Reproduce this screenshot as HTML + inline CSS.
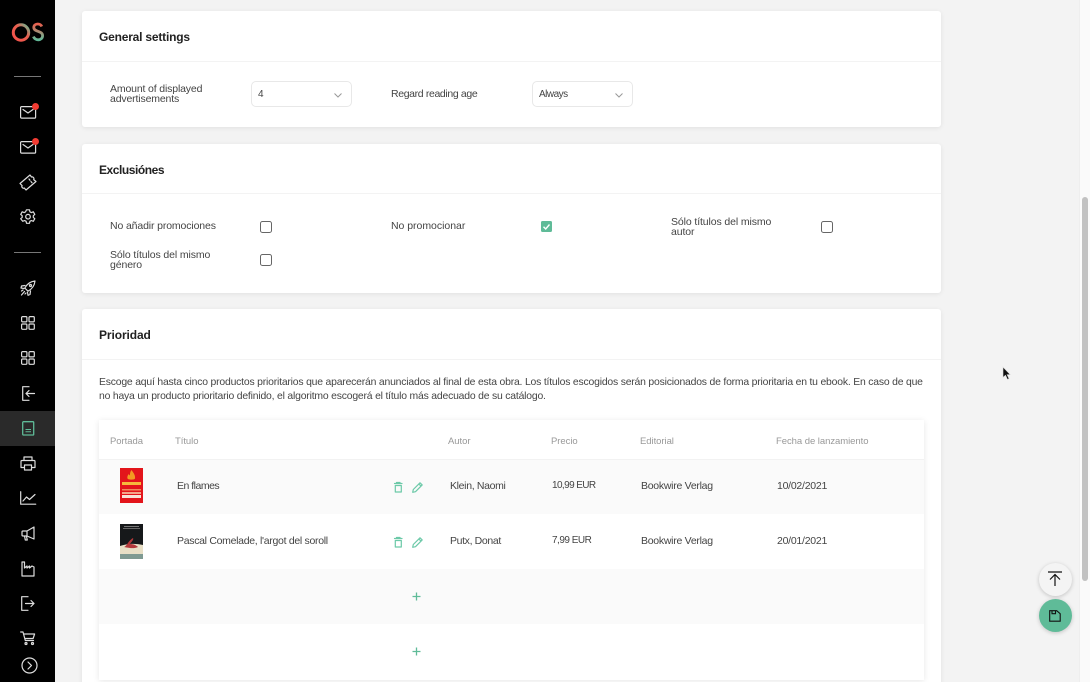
<!DOCTYPE html>
<html><head><meta charset="utf-8">
<style>
html,body{margin:0;padding:0;width:1090px;height:682px;overflow:hidden;background:#f3f3f3;font-family:"Liberation Sans",sans-serif;color:#444;}
#w{position:relative;width:1090px;height:682px;overflow:hidden;background:#f3f3f3;filter:blur(.3px)}
.a{position:absolute}
.t{position:absolute;font-size:10.5px;line-height:10px;white-space:nowrap;color:#444;letter-spacing:-.2px}
.card{position:absolute;left:82px;width:859px;background:#fff;border-radius:3px;box-shadow:0 1px 5px rgba(0,0,0,.08);overflow:hidden}
.h{position:absolute;font-size:12px;font-weight:bold;color:#222;line-height:14px;white-space:nowrap}
.line{position:absolute;left:0;right:0;height:1px;background:#f3f3f3}
.sel{position:absolute;width:99px;height:24px;border:1px solid #e8e8e8;border-radius:5px;background:#fff;top:81px}
.sel span{position:absolute;left:6px;top:7px;font-size:10px;line-height:11px;color:#444}
.sel svg{position:absolute;left:82px;top:11px}
.cb{position:absolute;width:9.5px;height:9.5px;border:1.3px solid #666;border-radius:2.5px;background:#fff}
.th{position:absolute;top:437px;font-size:9.5px;line-height:10px;color:#999;letter-spacing:-.05px;white-space:nowrap}
svg{position:absolute;overflow:visible}
.ic{fill:none;stroke:#ddd;stroke-width:1.2;stroke-linejoin:round;stroke-linecap:round}
.g{fill:none;stroke:#6cc9a8;stroke-width:1.2;stroke-linecap:round;stroke-linejoin:round}
</style></head>
<body>
<div id="w">
<!-- scrollbar -->
<div class="a" style="left:1079px;top:0;width:11px;height:682px;background:#fafafa;border-left:1px solid #eee;box-sizing:border-box"></div>
<div class="a" style="left:1081.5px;top:196.5px;width:6.5px;height:384px;background:#c1c1c1;border-radius:3px"></div>

<!-- cards -->
<div class="card" style="top:11px;height:116px"><div class="line" style="top:50px"></div></div>
<div class="card" style="top:144px;height:149px"><div class="line" style="top:49px"></div></div>
<div class="card" style="top:309px;height:385px"><div class="line" style="top:50px"></div></div>

<div class="h" style="left:99px;top:30px;letter-spacing:-.2px">General settings</div>
<div class="h" style="left:99px;top:163px;letter-spacing:-.45px">Exclusiónes</div>
<div class="h" style="left:99px;top:328px;letter-spacing:-.1px">Prioridad</div>

<!-- General -->
<div class="t" style="left:110px;top:84px;letter-spacing:-.15px">Amount of displayed<br>advertisements</div>
<div class="sel" style="left:251px"><span>4</span><svg width="8" height="5"><path d="M.5.5l3.500 3.500 3.500-3.500" fill="none" stroke="#999" stroke-width="1"/></svg></div>
<div class="t" style="left:391px;top:89px;letter-spacing:-.36px">Regard reading age</div>
<div class="sel" style="left:532px"><span style="letter-spacing:-.5px;top:7px">Always</span><svg width="8" height="5"><path d="M.5.5l3.500 3.500 3.500-3.500" fill="none" stroke="#999" stroke-width="1"/></svg></div>

<!-- Exclusiones -->
<div class="t" style="left:110px;top:221px;letter-spacing:-.13px">No añadir promociones</div>
<div class="cb" style="left:260px;top:221px"></div>
<div class="t" style="left:391px;top:221px;letter-spacing:-.03px">No promocionar</div>
<div class="a" style="left:541px;top:221px;width:11px;height:11px;background:#5fbb98;border-radius:1.5px"></div>
<svg style="left:541px;top:221px" width="11" height="11"><path d="M2.500 5.800l2.200 2.200 3.800-4.500" fill="none" stroke="#fff" stroke-width="1.400"/></svg>
<div class="t" style="left:671px;top:217px;letter-spacing:-.11px">Sólo títulos del mismo<br>autor</div>
<div class="cb" style="left:821px;top:221px"></div>
<div class="t" style="left:110px;top:250px;letter-spacing:-.11px">Sólo títulos del mismo<br>género</div>
<div class="cb" style="left:260px;top:254px"></div>

<!-- Prioridad -->
<div class="t" style="left:99px;top:376px;line-height:14px;letter-spacing:-.19px;font-size:10.4px">Escoge aquí hasta cinco productos prioritarios que aparecerán anunciados al final de esta obra. Los títulos escogidos serán posicionados de forma prioritaria en tu ebook. En caso de que<br>no haya un producto prioritario definido, el algoritmo escogerá el título más adecuado de su catálogo.</div>

<!-- table -->
<div class="a" style="left:99px;top:420px;width:825px;height:260px;background:#fff;box-shadow:0 1px 6px rgba(0,0,0,.1)"></div>
<div class="a" style="left:99px;top:459px;width:825px;height:55px;background:#fafafa;border-top:1px solid #f2f2f2;box-sizing:border-box"></div>
<div class="a" style="left:99px;top:569px;width:825px;height:55px;background:#fafafa"></div>
<div class="th" style="left:110px">Portada</div>
<div class="th" style="left:175px">Título</div>
<div class="th" style="left:448px">Autor</div>
<div class="th" style="left:551px">Precio</div>
<div class="th" style="left:640px">Editorial</div>
<div class="th" style="left:776px">Fecha de lanzamiento</div>

<!-- Row 1 -->
<div class="a" style="left:120px;top:468px;width:23px;height:35px;background:#e3151b"></div>
<svg style="left:120px;top:468px" width="23" height="35">
<path d="M11.500 2c2 3 4 5 3.500 8.500-.3 1.500-7 1.500-7.500 0-.6-2 .5-3 1-4.500.5 1 1 1 1.200 1.500.5-2 .3-3.500 1.800-5.500z" fill="#f29a22"/>
<rect x="2" y="14" width="19" height="3" fill="#f6b93c"/>
<rect x="2" y="21" width="19" height="1.500" fill="#f08a5c"/>
<rect x="2" y="24" width="19" height="2" fill="#f4a68a"/>
<rect x="2" y="27" width="19" height="3" fill="#f8e3d8"/>
</svg>
<div class="t" style="left:177px;top:481px;letter-spacing:-.5px">En flames</div>
<svg style="left:393.500px;top:481.500px" width="9" height="11"><path class="g" d="M.5 1.500h7.500M2.500 1.500V.5h3.500v1M1.300 3.500h6v6.500h-6z"/></svg>
<svg style="left:412px;top:481.500px" width="11" height="11"><path class="g" d="M.7 10.300l.6-2.800L8 .8l2.200 2.100L3.500 9.700zM6.800 2l2.200 2.100"/></svg>
<div class="t" style="left:450px;top:481px;letter-spacing:-.33px">Klein, Naomi</div>
<div class="t" style="left:552px;top:481px;font-size:10px;letter-spacing:-.6px">10,99 EUR</div>
<div class="t" style="left:641px;top:481px;letter-spacing:-.27px">Bookwire Verlag</div>
<div class="t" style="left:777px;top:481px;letter-spacing:-.25px">10/02/2021</div>

<!-- Row 2 -->
<div class="a" style="left:120px;top:524px;width:23px;height:35px;background:#16181a"></div>
<svg style="left:120px;top:524px" width="23" height="35">
<rect x="4" y="2" width="15" height="1" fill="#777"/>
<rect x="3" y="4" width="17" height="1" fill="#666"/>
<path d="M0 22c6-2 14-3 23-1v10H0z" fill="#e8dfc6"/>
<path d="M4 23c3-1 4-6 9-9 1 2-2 4-3 6 3 0 6 1 8 3-4 2-9 1-14 0z" fill="#b3383a"/>
<rect y="30" width="23" height="5" fill="#7f9a92"/>
</svg>
<div class="t" style="left:177px;top:536px;letter-spacing:-.3px">Pascal Comelade, l'argot del soroll</div>
<svg style="left:393.500px;top:536.500px" width="9" height="11"><path class="g" d="M.5 1.500h7.500M2.500 1.500V.5h3.500v1M1.300 3.500h6v6.500h-6z"/></svg>
<svg style="left:412px;top:536.500px" width="11" height="11"><path class="g" d="M.7 10.300l.6-2.800L8 .8l2.200 2.100L3.500 9.700zM6.800 2l2.200 2.100"/></svg>
<div class="t" style="left:450px;top:536px;letter-spacing:-.36px">Putx, Donat</div>
<div class="t" style="left:552px;top:536px;font-size:10px;letter-spacing:-.5px">7,99 EUR</div>
<div class="t" style="left:641px;top:536px;letter-spacing:-.27px">Bookwire Verlag</div>
<div class="t" style="left:777px;top:536px;letter-spacing:-.25px">20/01/2021</div>

<!-- plus -->
<svg style="left:412px;top:592px" width="9" height="9"><path d="M4.500.5v8M.5 4.500h8" stroke="#5fbb98" stroke-width="1.300" fill="none"/></svg>
<svg style="left:412px;top:647px" width="9" height="9"><path d="M4.500.5v8M.5 4.500h8" stroke="#5fbb98" stroke-width="1.300" fill="none"/></svg>

<!-- floating buttons -->
<div class="a" style="left:1039px;top:563px;width:33px;height:33px;border-radius:50%;background:#f4f4f4;box-shadow:0 1px 4px rgba(0,0,0,.2)"></div>
<svg style="left:1047px;top:571px" width="16" height="16"><path d="M1 1h14M8 15V3.500M3 8.500l5-5 5 5" fill="none" stroke="#111" stroke-width="1.200"/></svg>
<div class="a" style="left:1039px;top:599px;width:33px;height:33px;border-radius:50%;background:#5fbb98;box-shadow:0 1px 4px rgba(0,0,0,.2)"></div>
<svg style="left:1049px;top:610px" width="12" height="12"><path d="M.7.7h7l3.500 3v7.500H.7zM3 .7v3h3.500v-3" fill="none" stroke="#111" stroke-width="1.100"/></svg>

<!-- cursor -->
<svg style="left:1002px;top:366px" width="10" height="15"><path d="M1 1v10.500l2.500-2.200 2 4.200 1.600-.8-2-4h3.200z" fill="#111" stroke="#ddd" stroke-width=".6"/></svg>

<!-- sidebar -->
<div class="a" style="left:0;top:0;width:55px;height:682px;background:#000"></div>
<div class="a" style="left:0;top:411px;width:55px;height:35px;background:#2a2a2a"></div>
<div class="a" style="left:14px;top:76px;width:27px;height:1px;background:#777"></div>
<div class="a" style="left:14px;top:252px;width:27px;height:1px;background:#777"></div>

<!-- logo -->
<svg style="left:11px;top:22px" width="34" height="22">
<defs><linearGradient id="lg" x1="0" y1="1" x2="1" y2="0"><stop offset="0" stop-color="#f4504a"/><stop offset=".6" stop-color="#e8604f"/><stop offset="1" stop-color="#62c09a"/></linearGradient>
<linearGradient id="lg2" x1="0" y1="0" x2="0" y2="1"><stop offset="0" stop-color="#e8604f"/><stop offset="1" stop-color="#62b998"/></linearGradient></defs>
<circle cx="10" cy="10.500" r="7.700" fill="none" stroke="url(#lg)" stroke-width="3"/>
<path d="M30.800 4.500c-.8-1.700-2.300-2.500-4-2.500-2.300 0-4 1.400-4 3.500 0 4.800 8.800 2.800 8.800 8.300 0 2.400-2 4-4.400 4-2.300 0-3.900-1.200-4.800-3.200" fill="none" stroke="url(#lg2)" stroke-width="2.800"/>
</svg>

<!-- mail -->
<svg class="ic" style="left:20px;top:106px" width="16" height="13"><rect x=".6" y=".6" width="15" height="11.500" rx="1"/><path d="M3 3.500l5 3.500 5-3.500"/></svg>
<div class="a" style="left:32px;top:103px;width:7px;height:7px;border-radius:50%;background:#f23c33"></div>
<svg class="ic" style="left:20px;top:141px" width="16" height="13"><rect x=".6" y=".6" width="15" height="11.500" rx="1"/><path d="M3 3.500l5 3.500 5-3.500"/></svg>
<div class="a" style="left:32px;top:138px;width:7px;height:7px;border-radius:50%;background:#f23c33"></div>
<!-- ticket -->
<svg class="ic" style="left:19px;top:174px" width="18" height="17"><path d="M1 9.500L11 1l1.500 2c.7-.3 1.500 0 2 .6.500.6.600 1.300.2 2L17 7.500 7 16l-1.700-2c-.7.400-1.500.200-2-.4-.6-.6-.6-1.400-.2-2zM10 5l1 1.200M12 7.500l1 1.200"/></svg>
<!-- gear -->
<svg class="ic" style="left:20px;top:209px" width="16" height="16"><path d="M6.500.8h3l.4 2 1.500.8 1.900-.8 1.500 2.600-1.500 1.300v1.700l1.500 1.300-1.500 2.600-1.900-.8-1.500.8-.4 2h-3l-.4-2-1.500-.8-1.900.8L.7 9.700l1.500-1.300V6.700L.7 5.400l1.500-2.600 1.900.8 1.500-.8z"/><circle cx="8" cy="7.700" r="2.300"/></svg>
<!-- rocket -->
<svg class="ic" style="left:20px;top:280px" width="16" height="16"><path d="M15 1C10 1.500 7 4 4.800 8l3.200 3.200C12 9 14.500 6 15 1zM5 5.500L1.500 6 1 8l3 .5M10.500 11l-.5 3.500-2 .8-.5-3M4.500 11.500L1.500 15M3 10L1.500 11M6 13l-1 1"/><circle cx="10.500" cy="5.500" r="1"/></svg>
<!-- grids -->
<svg class="ic" style="left:21px;top:316px" width="14" height="14"><rect x=".6" y=".6" width="5.300" height="5.300" rx="1"/><rect x="8" y=".6" width="5.300" height="5.300" rx="1"/><rect x=".6" y="8" width="5.300" height="5.300" rx="1"/><rect x="8" y="8" width="5.300" height="5.300" rx="1"/></svg>
<svg class="ic" style="left:21px;top:351px" width="14" height="14"><rect x=".6" y=".6" width="5.300" height="5.300" rx="1"/><rect x="8" y=".6" width="5.300" height="5.300" rx="1"/><rect x=".6" y="8" width="5.300" height="5.300" rx="1"/><rect x="8" y="8" width="5.300" height="5.300" rx="1"/></svg>
<!-- import -->
<svg class="ic" style="left:22px;top:386px" width="13" height="15"><path d="M7 .7H.7v13.600H7M12.500 7.500H4M7 4.500l-3 3 3 3"/></svg>
<!-- book active -->
<svg style="left:22px;top:421px" width="13" height="15"><rect x=".7" y=".7" width="11" height="13.300" rx=".8" fill="none" stroke="#5fbb98" stroke-width="1.300"/><path d="M3.500 8.500h5.500M3.500 10.800h5.500" stroke="#5fbb98" stroke-width="1"/></svg>
<!-- printer -->
<svg class="ic" style="left:20px;top:456px" width="16" height="15"><path d="M4 4.500V1h8v3.500M4 11.500H1V5.500c0-.6.400-1 1-1h12c.6 0 1 .4 1 1v6h-3"/><rect x="4.500" y="9" width="7" height="5"/></svg>
<!-- chart -->
<svg class="ic" style="left:20px;top:491px" width="16" height="14"><path d="M.7.700v12.500h15M3 10l3.500-4 3 2.500L15 3.500"/></svg>
<!-- megaphone -->
<svg class="ic" style="left:21px;top:526px" width="14" height="15"><path d="M13 1v12L6 10H2c-.6 0-1-.4-1-1V6c0-.6.400-1 1-1h4zM6 5v5M3.500 10l.8 4h2l-.8-3.500"/></svg>
<!-- factory -->
<svg class="ic" style="left:21px;top:561px" width="14" height="15"><path d="M1 1h2.500v6l2.500-2v2l2.500-2v2l2.500-2 2 1v9H1z"/></svg>
<!-- export -->
<svg class="ic" style="left:21px;top:596px" width="14" height="15"><path d="M7 .7H.7v13.600H7M13 7.500H4.500M10 4.500l3 3-3 3"/></svg>
<!-- cart -->
<svg class="ic" style="left:20px;top:631px" width="16" height="15"><path d="M.7 1h2.300l2.300 8.500h8.200M3.600 3h11l-1.500 4.500H4.800"/><circle cx="6" cy="12.500" r="1"/><circle cx="12.500" cy="12.500" r="1"/></svg>
<!-- circle arrow -->
<svg class="ic" style="left:21px;top:657px" width="17" height="17"><circle cx="8.500" cy="8.500" r="7.500"/><path d="M7 5l3.500 3.500L7 12"/></svg>
</div>
</body></html>
